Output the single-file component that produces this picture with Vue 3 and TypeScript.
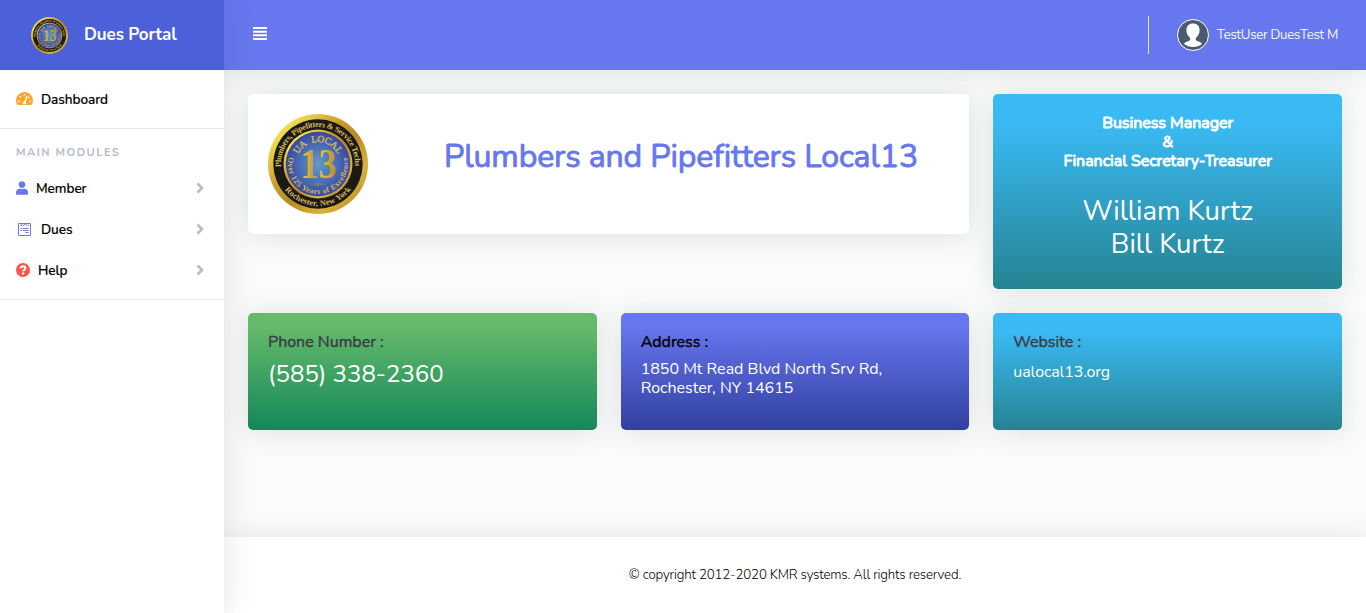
<script setup lang="ts">
interface MenuItem { label: string; icon: 'user' | 'form' | 'help' }

const modules: MenuItem[] = [
  { label: 'Member', icon: 'user' },
  { label: 'Dues', icon: 'form' },
  { label: 'Help', icon: 'help' },
]
</script>

<template>
  <svg class="defs" aria-hidden="true">
    <defs>
      <linearGradient id="gold" x1="0" y1="0" x2="1" y2="1">
        <stop offset="0" stop-color="#e3c43c" /><stop offset=".16" stop-color="#f0dc52" />
        <stop offset=".4" stop-color="#c99c2a" /><stop offset=".55" stop-color="#b88a24" />
        <stop offset=".75" stop-color="#d9b43a" /><stop offset="1" stop-color="#a87a1c" />
      </linearGradient>
      <linearGradient id="numeral" x1="0" y1="0" x2="1" y2="0">
        <stop offset="0" stop-color="#ecd24a" /><stop offset=".4" stop-color="#c4982c" />
        <stop offset=".6" stop-color="#e0bd3e" /><stop offset="1" stop-color="#b98b26" />
      </linearGradient>
      <radialGradient id="enamel">
        <stop offset="0" stop-color="#6199c8" /><stop offset=".55" stop-color="#4a70b8" /><stop offset="1" stop-color="#3a479f" />
      </radialGradient>
      <path id="arc-top" d="M13.120 53 A37 37 0 1 1 86.880 53" />
      <path id="arc-bottom" d="M10.600 64 A41.800 41.800 0 0 0 89.400 64" />
      <path id="arc-local" d="M28 50 A22 22 0 0 1 72 50" />
      <path id="arc-years" d="M21.400 41 A30 30 0 1 0 78.600 41" />
      <symbol id="seal" viewBox="0 0 100 100">
        <circle cx="50" cy="50" r="50" fill="url(#gold)" />
        <circle cx="50" cy="50" r="44.7" fill="#1b1a18" />
        <circle cx="50" cy="50" r="34.5" fill="url(#gold)" />
        <circle cx="50" cy="50" r="32.3" fill="url(#enamel)" />
        <g fill="#d9bd55" font-family="'Liberation Serif', serif" font-weight="700">
          <text font-size="8.2"><textPath href="#arc-top" textLength="121">Plumbers, Pipefitters &amp; Service Techs</textPath></text>
          <text font-size="8.2"><textPath href="#arc-bottom" startOffset="50%" text-anchor="middle" textLength="76">Rochester, New York</textPath></text>
          <text font-size="9.6" font-weight="400" stroke="#d9bd55" stroke-width=".3" word-spacing="3"><textPath href="#arc-local" startOffset="50%" text-anchor="middle" textLength="49">UA LOCAL</textPath></text>
          <text font-size="7.8" fill="#d2b757"><textPath href="#arc-years" startOffset="50%" text-anchor="middle" textLength="108">Over 125 Years of Excellence</textPath></text>
        </g>
        <text x="50.5" y="64.3" fill="url(#numeral)" font-family="'Liberation Serif', serif" font-weight="700" font-size="42.500" text-anchor="middle" textLength="36" lengthAdjust="spacingAndGlyphs">13</text>
        <path d="M42 70.2h15M47 70.2l3-1.6 3 1.6-3 1.6z" fill="none" stroke="#8f925f" stroke-width=".6" />
      </symbol>
    </defs>
  </svg>

  <div class="page">
    <aside class="sidebar">
      <div class="brand">
        <svg class="brand-seal"><use href="#seal" /></svg>
        <span class="brand-name">Dues Portal</span>
      </div>
      <a class="nav-item dashboard">
        <svg class="ico-dash" viewBox="0 0 576 512"><path fill="#ffa426" d="M288 32C129 32 0 161 0 320c0 53 14 102 39 145 6 9 16 15 27 15h444c11 0 21-6 27-15 25-43 39-92 39-145C576 161 447 32 288 32zm0 64c15 0 27 10 31 24-1 2-3 5-4 7l-9 28c-5 3-11 5-18 5-18 0-32-14-32-32s14-32 32-32zM96 384c-18 0-32-14-32-32s14-32 32-32 32 14 32 32-14 32-32 32zm48-160c-18 0-32-14-32-32s14-32 32-32 32 14 32 32-14 32-32 32zm247-40-61 184c13 12 22 29 22 48 0 12-4 23-9 32H233c-6-9-9-20-9-32 0-34 27-62 61-64l61-184c4-12 18-19 30-15s19 18 15 31zm15 57 15-47c3-1 7-2 11-2 18 0 32 14 32 32s-14 32-32 32c-11 0-20-6-26-15zm74 143c-18 0-32-14-32-32s14-32 32-32 32 14 32 32-14 32-32 32z" /></svg>
        <span class="label">Dashboard</span>
      </a>
      <div class="heading">MAIN MODULES</div>
      <nav class="modules">
        <a v-for="m in modules" :key="m.label" class="nav-item">
          <svg v-if="m.icon === 'user'" class="ico-user" viewBox="0 0 448 512"><path fill="#6777ef" d="M224 256c71 0 128-57 128-128S295 0 224 0 96 57 96 128s57 128 128 128zm90 32h-17a174 174 0 0 1-146 0h-17C60 288 0 348 0 422v42c0 27 21 48 48 48h352c27 0 48-21 48-48v-42c0-74-60-134-134-134z" /></svg>
          <svg v-else-if="m.icon === 'form'" class="ico-form" viewBox="0 0 13 13"><path fill="none" stroke="#6777ef" d="M.5 .5h12v12H.5zM2.500 2.500h1.500M5 2.500h1M7.500 2.500h1M10 2.500h1M3.500 1.500h1M6 1.500h1M8.500 1.500h1M2.500 5.500h1.500M5 5.500h5.500M2.500 7.500h1.500M5 7.500h5.500M7.500 9.500h3" /></svg>
          <svg v-else class="ico-help" viewBox="0 0 14 14"><circle cx="7" cy="7" r="7" fill="#fc544b" /><path d="M4.600 5.200c.3-1.300 1.200-1.900 2.500-1.900 1.300 0 2.300.8 2.300 2 0 1.600-2.200 1.600-2.200 3" fill="none" stroke="#fff" stroke-width="1.900" /><circle cx="7.100" cy="10.500" r="1.250" fill="#fff" /></svg>
          <span class="label">{{ m.label }}</span>
          <svg class="chevron" viewBox="0 0 8 12"><path d="M1.500 1.500 6 6l-4.500 4.500" fill="none" stroke="#b7b9cc" stroke-width="2.500" /></svg>
        </a>
      </nav>
    </aside>

    <div class="main">
      <header class="topbar">
        <svg class="burger" viewBox="0 0 14 13"><path d="M0 1h14M0 4.700h14M0 8.300h14M0 12h14" stroke="#fff" stroke-width="2" /></svg>
        <div class="divider"></div>
        <svg class="avatar" viewBox="0 0 32 32">
          <circle cx="16" cy="16" r="15.500" fill="#4a5a70" stroke="#fff" />
          <path fill="#fff" d="M16 4.500c-4.200 0-6.600 2.600-6.600 6.600 0 3.400 1.400 6.200 3.500 7.600.5.400.6 2.200-.2 2.800-1.600 1-4.900 1.300-5.700 3.600 2.400 2.100 5.500 3 9 3s6.600-.9 9-3c-.8-2.300-4.100-2.600-5.700-3.600-.8-.6-.7-2.400-.2-2.800 2.100-1.400 3.500-4.200 3.500-7.600 0-4-2.400-6.600-6.600-6.600z" />
        </svg>
        <span class="user-name">TestUser DuesTest M</span>
      </header>

      <main class="content">
        <section class="card banner">
          <svg class="banner-seal"><use href="#seal" /></svg>
          <h1>Plumbers and Pipefitters Local13</h1>
        </section>
        <section class="card sky manager">
          <div class="role"><div>Business Manager</div><div>&amp;</div><div>Financial Secretary-Treasurer</div></div>
          <div class="names"><div>William Kurtz</div><div>Bill Kurtz</div></div>
        </section>
        <section class="card green">
          <h2>Phone Number :</h2>
          <div class="phone">(585) 338-2360</div>
        </section>
        <section class="card indigo">
          <h2>Address :</h2>
          <div class="address"><div>1850 Mt Read Blvd North Srv Rd,</div><div>Rochester, NY 14615</div></div>
        </section>
        <section class="card sky">
          <h2>Website :</h2>
          <div class="site">ualocal13.org</div>
        </section>
      </main>

      <footer class="footer">© copyright 2012-2020 KMR systems. All rights reserved.</footer>
    </div>
  </div>
</template>

<style>
html, body { margin: 0; overflow: hidden; }
</style>

<style scoped>
.defs { display: block; width: 0; height: 0; }
.page { display: flex; width: 1366px; height: 613px; background: #fafcfb; font-family: Nunito, Lato, sans-serif; color: #000; white-space: nowrap; overflow: hidden; }
.page svg { display: block; flex: none; }

.sidebar { position: relative; z-index: 1; width: 224px; flex: none; background: #fff; box-shadow: 0 2px 28px rgba(58, 69, 65, .15); }
.brand { display: flex; align-items: center; height: 70px; box-sizing: border-box; padding-left: 31px; background: #4c60da; color: #fff; font-weight: 700; font-size: 17px; letter-spacing: -.12px; }
.brand-seal { width: 37px; height: 37px; }
.brand-name { margin-left: 16px; padding-bottom: 2px; }
.nav-item { display: flex; align-items: center; height: 41px; box-sizing: border-box; padding: 0 20px 1px 16px; font-size: 13.600px; font-weight: 500; letter-spacing: -.05px; }
.label { padding-top: 1px; -webkit-text-stroke: .2px currentColor; }
.dashboard { height: 59px; border-bottom: 1px solid #e3e6f0; }
.ico-dash { width: 17px; height: 15px; margin-right: 8px; }
.heading { padding: 17px 16px 0; height: 39px; box-sizing: border-box; font-size: 11px; line-height: 14px; font-weight: 700; letter-spacing: 1.500px; color: #b7b9cc; }
.modules { border-bottom: 1px solid #e3e6f0; padding-bottom: 8px; }
.ico-user { width: 12px; height: 14px; margin-right: 8px; }
.ico-form { width: 13px; height: 13px; margin: 0 10px 0 2px; }
.ico-help { width: 14px; height: 14px; margin-right: 8px; }
.chevron { width: 8px; height: 12px; margin-left: auto; }

.main { flex: 1; display: flex; flex-direction: column; min-width: 0; }
.topbar { display: flex; align-items: center; height: 70px; flex: none; box-sizing: border-box; padding: 0 28px 0 29px; background: #6777ef; color: #fff; box-shadow: 0 2px 28px rgba(58, 69, 65, .15); }
.burger { width: 14px; height: 13px; margin-bottom: 3px; }
.divider { width: 1px; height: 38px; margin: 0 28px 0 auto; background: #e3e6f0; }
.avatar { width: 32px; height: 32px; margin-right: 8px; }
.user-name { font-size: 13.300px; font-weight: 300; letter-spacing: -.23px; padding-bottom: 1px; -webkit-text-stroke: .15px currentColor; }

.content { flex: 1; display: grid; grid-template-columns: repeat(3, 1fr); grid-template-rows: 195px 117px; gap: 24px; padding: 24px; }
.card { box-sizing: border-box; padding: 20px; border-radius: 5px; box-shadow: 0 2px 28px rgba(58, 69, 65, .15); }
.banner { grid-column: span 2; display: flex; height: 140px; background: #fff; }
.banner-seal { width: 100px; height: 100px; }
.banner h1 { margin: 0; padding: 23px 0 0 76px; font-size: 32px; line-height: 40px; font-weight: 400; letter-spacing: -.11px; color: #6777ef; -webkit-text-stroke: .9px currentColor; }
.sky { background: linear-gradient(180deg, #3abaf4 15%, #258391 100%); color: #fff; }
.green { background: linear-gradient(180deg, #66bb6a 10%, #14875b 100%); color: #fff; }
.indigo { background: linear-gradient(180deg, #6777ef 10%, #313fa0 100%); color: #fff; }
.manager { text-align: center; }
.role { font-size: 16px; line-height: 19px; font-weight: 400; letter-spacing: -.04px; -webkit-text-stroke: .9px currentColor; }
.names { margin-top: 24px; font-size: 27.500px; line-height: 33px; }
.card h2 { margin: 0; font-size: 16px; line-height: 18px; font-weight: 400; color: #3a3b45; -webkit-text-stroke: .4px currentColor; }
.card.indigo h2 { color: #000; }
.phone { font-size: 24px; line-height: 28px; margin-top: 9px; }
.address { font-size: 16px; line-height: 19px; margin-top: 9px; }
.site { font-size: 16px; line-height: 19px; margin-top: 12px; letter-spacing: -.1px; }

.footer { display: flex; align-items: center; justify-content: center; height: 76px; flex: none; background: #fff; box-shadow: 0 2px 28px rgba(58, 69, 65, .15); font-size: 13.300px; font-weight: 300; letter-spacing: -.18px; }
</style>
